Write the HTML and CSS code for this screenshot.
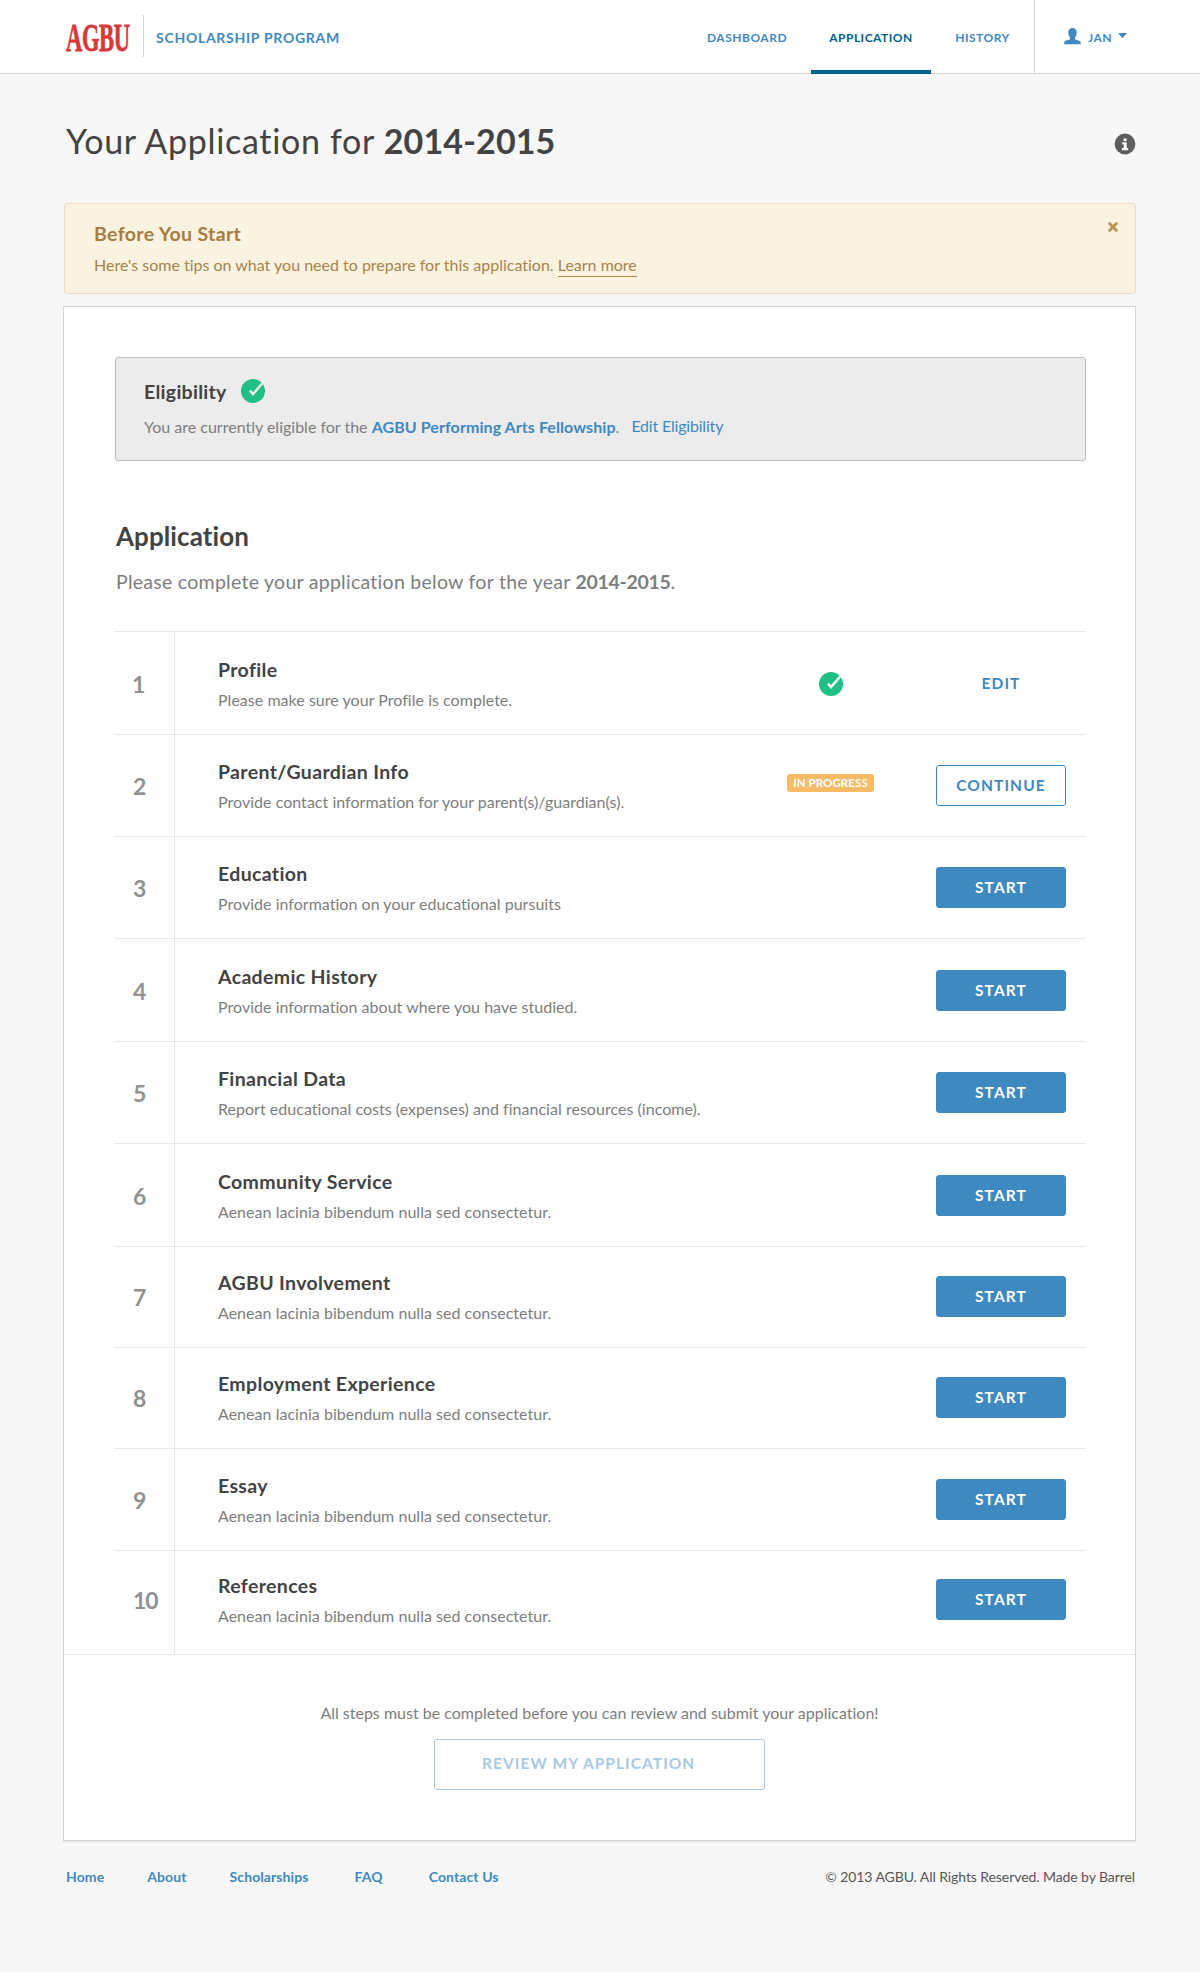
FILE: index.html
```html
<!DOCTYPE html>
<html lang="en">
<head>
<meta charset="utf-8">
<title>AGBU Scholarship Program – Application</title>
<link rel="stylesheet" href="styles.css">
</head>
<body>
<svg class="defs" width="0" height="0" aria-hidden="true">
  <symbol id="check" viewBox="0 0 24 24">
    <circle cx="12" cy="12" r="12" fill="#1fbf86"/>
    <path d="M8.9 11.6 12 15 21.6 4" fill="none" stroke="currentColor" stroke-width="2.5"/>
  </symbol>
</svg>

<header class="header">
  <a class="logo">
    <svg width="70" height="48" viewBox="0 0 70 48" role="img" aria-label="AGBU">
      <text class="logo-text" transform="translate(1 35.6) scale(.55 1)" textLength="117" lengthAdjust="spacing">AGBU</text>
    </svg>
  </a>
  <span class="program">SCHOLARSHIP PROGRAM</span>
  <nav class="nav">
    <a class="nav-item nav-dashboard">DASHBOARD</a>
    <a class="nav-item nav-application">APPLICATION</a>
    <a class="nav-item nav-history">HISTORY</a>
  </nav>
  <a class="user">
    <svg class="user-icon" width="17" height="17" viewBox="0 0 17 17"><path fill="currentColor" d="M8.5 0C11 0 12.7 1.7 12.7 4.3 12.7 6.800 11.900 8.500 10.900 9.400V11.100C11.300 12.200 16.800 12 16.800 15.200V16.300H.2V15.200C.2 12 5.700 12.200 6.100 11.100V9.400C5.100 8.500 4.300 6.800 4.300 4.300 4.300 1.700 6 0 8.500 0Z"/></svg>
    <span>JAN</span>
    <svg class="caret" width="9" height="6" viewBox="0 0 9 6"><path fill="currentColor" d="M0 0H9L4.500 5.300Z"/></svg>
  </a>
</header>

<main class="page">
  <div class="page-head">
    <h1>Your Application for <strong>2014-2015</strong></h1>
    <svg width="22" height="22" viewBox="0 0 22 22"><circle cx="11" cy="11" r="10.400" fill="#5e5e5e"/><path fill="#fff" d="M9.600 5.400h3v2.600h-3zM8.100 9.200h4.600v5.900h1.500v2.200H7.900v-2.200h1.800v-3.800H8.100z"/></svg>
  </div>

  <section class="notice">
    <div>
      <h2>Before You Start</h2>
      <p>Here's some tips on what you need to prepare for this application. <a>Learn more</a></p>
    </div>
    <svg class="close" width="12" height="12" viewBox="0 0 12 12"><path d="M1.800 1.800 10.200 10.200M10.200 1.800 1.800 10.200" stroke="#bd9354" stroke-width="2.800"/></svg>
  </section>

  <div class="panel">
    <div class="panel-body">
      <section class="eligibility">
        <div class="eligibility-head"><h2>Eligibility</h2><svg class="check" width="24" height="24"><use href="#check"/></svg></div>
        <div class="eligibility-text"><p>You are currently eligible for the <strong>AGBU Performing Arts Fellowship</strong>.</p><a>Edit Eligibility</a></div>
      </section>

      <h2 class="section-title">Application</h2>
      <p class="lead">Please complete your application below for the year <strong>2014-2015</strong>.</p>

      <ol class="steps">
        <li class="step h103 drop1">
          <span class="num num-one">1</span>
          <div class="info"><h3>Profile</h3><p>Please make sure your Profile is complete.</p></div>
          <div class="status"><svg class="check" width="24" height="24"><use href="#check"/></svg></div>
          <a class="btn btn-link">EDIT</a>
        </li>
        <li class="step h102">
          <span class="num">2</span>
          <div class="info"><h3>Parent/Guardian Info</h3><p>Provide contact information for your parent(s)/guardian(s).</p></div>
          <div class="status status-badge"><span class="badge">IN PROGRESS</span></div>
          <a class="btn btn-outline">CONTINUE</a>
        </li>
        <li class="step h102">
          <span class="num">3</span>
          <div class="info"><h3>Education</h3><p>Provide information on your educational pursuits</p></div>
          <div class="status"></div>
          <a class="btn">START</a>
        </li>
        <li class="step h103 drop1">
          <span class="num">4</span>
          <div class="info"><h3>Academic History</h3><p>Provide information about where you have studied.</p></div>
          <div class="status"></div>
          <a class="btn">START</a>
        </li>
        <li class="step h102">
          <span class="num">5</span>
          <div class="info"><h3>Financial Data</h3><p>Report educational costs (expenses) and financial resources (income).</p></div>
          <div class="status"></div>
          <a class="btn">START</a>
        </li>
        <li class="step h103 drop1">
          <span class="num">6</span>
          <div class="info"><h3>Community Service</h3><p>Aenean lacinia bibendum nulla sed consectetur.</p></div>
          <div class="status"></div>
          <a class="btn">START</a>
        </li>
        <li class="step h101 raise1">
          <span class="num">7</span>
          <div class="info"><h3>AGBU Involvement</h3><p>Aenean lacinia bibendum nulla sed consectetur.</p></div>
          <div class="status"></div>
          <a class="btn">START</a>
        </li>
        <li class="step h101 raise1">
          <span class="num">8</span>
          <div class="info"><h3>Employment Experience</h3><p>Aenean lacinia bibendum nulla sed consectetur.</p></div>
          <div class="status"></div>
          <a class="btn">START</a>
        </li>
        <li class="step h102">
          <span class="num">9</span>
          <div class="info"><h3>Essay</h3><p>Aenean lacinia bibendum nulla sed consectetur.</p></div>
          <div class="status"></div>
          <a class="btn">START</a>
        </li>
        <li class="step h104 raise2">
          <span class="num">10</span>
          <div class="info"><h3>References</h3><p>Aenean lacinia bibendum nulla sed consectetur.</p></div>
          <div class="status"></div>
          <a class="btn">START</a>
        </li>
      </ol>
    </div>

    <section class="review">
      <p>All steps must be completed before you can review and submit your application!</p>
      <a class="review-btn">REVIEW MY APPLICATION</a>
    </section>
  </div>
</main>

<footer class="footer">
  <nav class="footer-nav">
    <a>Home</a>
    <a>About</a>
    <a class="footer-wide">Scholarships</a>
    <a class="footer-wide">FAQ</a>
    <a>Contact Us</a>
  </nav>
  <p>© 2013 AGBU. All Rights Reserved. Made by Barrel</p>
</footer>
</body>
</html>
```
FILE: styles.css
```css
* { box-sizing: border-box; }

body {
  margin: 0;
  background: #f7f7f7;
  color: #7e7e7e;
  font: 16px/24px Lato, "Liberation Sans", sans-serif;
  font-variant-ligatures: none;
}

h1, h2, h3, p, ol { margin: 0; padding: 0; }
svg { display: block; flex: none; }
.defs { position: absolute; }

/* Header */
.header {
  display: flex;
  height: 74px;
  padding-left: 65px;
  border-bottom: 1px solid #d4d4d4;
  background: #fff;
  color: #3f89c0;
  font-size: 12px;
  font-weight: 700;
  letter-spacing: .5px;
}
.logo {
  width: 79px;
  height: 42px;
  margin-top: 15px;
  border-right: 1px solid #d4d4d4;
}
.logo-text {
  fill: #d73838;
  stroke: #d73838;
  stroke-width: .8px;
  font: 700 41px "Liberation Serif", serif;
}
.program {
  margin-left: 12px;
  font-size: 14px;
  line-height: 75px;
  letter-spacing: .72px;
}
.nav { display: flex; margin-left: auto; }
.nav-item { height: 74px; line-height: 76px; text-align: center; }
.nav-dashboard { width: 128px; }
.nav-application { width: 120px; border-bottom: 4px solid #00608c; color: #00608c; }
.nav-history { width: 103px; }
.user {
  display: flex;
  width: 166px;
  height: 73px;
  padding-left: 29px;
  border-left: 1px solid #d4d4d4;
  line-height: 76px;
}
.user-icon { margin: 28px 7px 0 0; }
.caret { margin: 33px 0 0 6px; }

/* Page heading and notice */
.page { width: 1073px; margin-left: 63px; padding-top: 47px; }
.page-head { display: flex; justify-content: space-between; padding: 0 0 0 3px; color: #434343; }
.page-head svg { margin-top: 12px; }
h1 { font-size: 34px; line-height: 40px; font-weight: 400; letter-spacing: .68px; }
h1 strong { letter-spacing: .15px; }

.notice {
  display: flex;
  justify-content: space-between;
  height: 91px;
  margin: 42px 0 0 1px;
  padding: 17px 16px 0 29px;
  border: 1px solid #eedcc2;
  border-radius: 3px;
  background: #faf3e1;
  color: #a98349;
}
h2, h3 { font-size: 19.5px; line-height: 24px; letter-spacing: .35px; color: #434343; }
.notice h2 { padding-top: 1px; color: #a67c40; }
.notice p { margin-top: 7px; }
.notice a { display: inline-block; border-bottom: 1px solid #b88b45; line-height: 23px; }

/* Main panel */
.panel {
  height: 1535px;
  margin-top: 12px;
  border: 1px solid #d4d4d4;
  background: #fff;
  box-shadow: 0 2px 0 #ebebeb;
}
.panel-body { padding: 50px 49px 0 50px; }

.eligibility {
  height: 104px;
  margin-left: 1px;
  padding: 21px 28px 0;
  border: 1px solid #bebebe;
  border-radius: 3px;
  background: #ececec;
}
.eligibility-head { display: flex; align-items: center; gap: 14px; height: 24px; }
.eligibility .check { color: #ececec; }
.eligibility-text { display: flex; align-items: flex-start; gap: 12px; margin-top: 12px; }
.eligibility strong, .eligibility a { color: #3f89c0; }
.eligibility strong { letter-spacing: .08px; }
.eligibility a { line-height: 22px; letter-spacing: -.19px; }
.eligibility h2 { padding-top: 2px; letter-spacing: .28px; }
.check { color: #fff; }

.section-title { margin: 60px 0 0 2px; font-size: 26px; line-height: 30px; letter-spacing: .08px; }
.lead { margin: 19px 0 37px 2px; font-size: 19.5px; letter-spacing: .27px; }
.lead strong { letter-spacing: -.3px; }

/* Application steps */
.steps { list-style: none; }
.step {
  --top: 24px;
  display: grid;
  grid-template-columns: 61px 1fr 211px 130px;
  padding-right: 20px;
  border-top: 1px solid #e9e9e9;
}
.h101 { height: 101px; }
.h102 { height: 102px; }
.h103 { height: 103px; }
.h104 { height: 104px; }
.drop1 { --top: 25px; }
.raise1 { --top: 23px; }
.raise2 { --top: 22px; }

.num {
  padding: calc(var(--top) + 13px) 0 0 19px;
  border-right: 1px solid #e9e9e9;
  color: #929292;
  font-size: 23px;
  font-weight: 700;
  line-height: 28px;
  letter-spacing: -1px;
}
.num-one { padding-left: 18px; }
.info { padding: calc(var(--top) + 1px) 0 0 43px; }
.info p { margin-top: 6px; letter-spacing: .03px; white-space: nowrap; }
.status {
  display: flex;
  align-items: center;
  justify-content: center;
  height: 41px;
  margin-top: calc(var(--top) + 6px);
}
.status-badge { padding-bottom: 5px; }
.badge {
  height: 18px;
  padding: 0 6px;
  border-radius: 3px;
  background: #f8bb65;
  color: #fff;
  font-size: 11.5px;
  font-weight: 700;
  line-height: 18px;
  letter-spacing: .08px;
}
.btn {
  height: 41px;
  margin-top: calc(var(--top) + 6px);
  border: 1px solid #3e89bf;
  border-radius: 3px;
  background: #3e89bf;
  color: #fff;
  font-size: 15.5px;
  font-weight: 700;
  line-height: 39px;
  letter-spacing: 1.1px;
  text-align: center;
}
.btn-outline { background: #fff; color: #3f89c0; }
.btn-link { border-color: transparent; background: none; color: #3f89c0; }

/* Review */
.review {
  display: flex;
  flex-direction: column;
  align-items: center;
  padding-top: 46px;
  border-top: 1px solid #e9e9e9;
}
.review-btn {
  width: 331px;
  height: 51px;
  margin-top: 14px;
  padding-left: 47px;
  border: 1px solid #a9c9e2;
  border-radius: 3px;
  color: #a9c9e2;
  font-size: 15.5px;
  font-weight: 700;
  line-height: 47px;
  letter-spacing: 1.05px;
}

/* Footer */
.footer {
  display: flex;
  justify-content: space-between;
  width: 1069px;
  margin: 26px 0 0 66px;
  padding-bottom: 85px;
  color: #555;
  font-size: 14px;
  line-height: 20px;
}
.footer p { letter-spacing: -.08px; }
.footer-nav { display: flex; gap: 43px; color: #3f89c0; font-weight: 700; letter-spacing: .1px; }
.footer-wide { margin-right: 3px; }
```
